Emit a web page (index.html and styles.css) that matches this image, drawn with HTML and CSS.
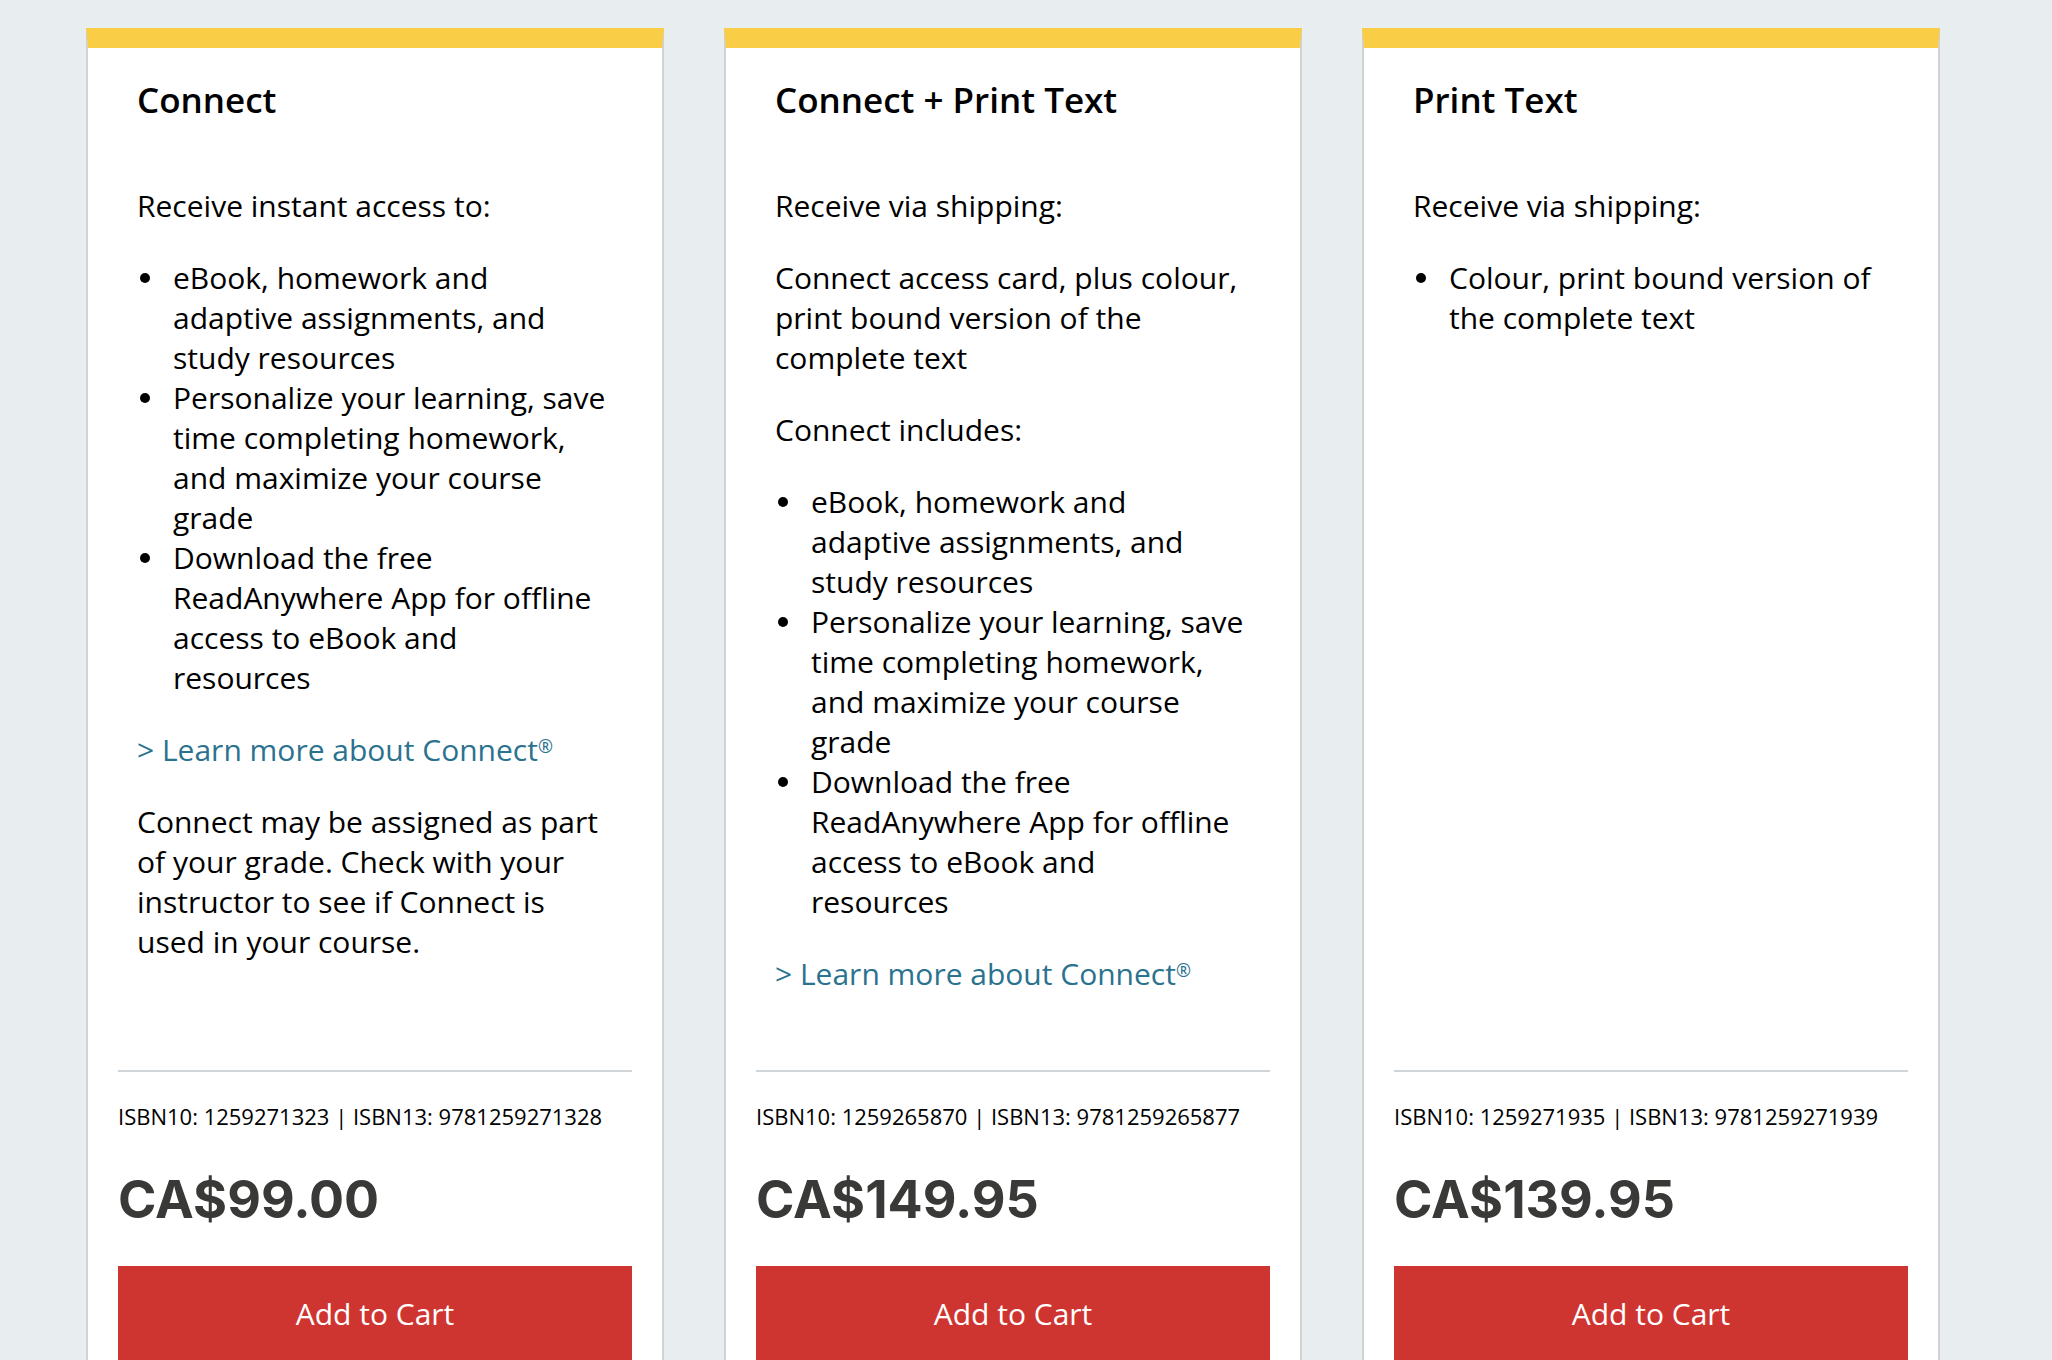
FILE: index.html
```
<!DOCTYPE html>
<html lang="en">
<head>
  <meta charset="utf-8">
  <meta name="viewport" content="width=device-width, initial-scale=1">
  <title>Purchase options</title>
  <link rel="stylesheet" href="styles.css">
</head>
<body>
  <main class="options">
    <article class="card">
      <div class="card-body">
        <h2 class="card-title">Connect</h2>
        <p>Receive instant access to:</p>
        <ul class="features">
          <li>eBook, homework and adaptive assignments, and study resources</li>
          <li>Personalize your learning, save time completing homework, and maximize your course grade</li>
          <li>Download the free ReadAnywhere App for offline access to eBook and<br>resources</li>
        </ul>
        <p><a class="learn-more" href="#connect">&gt; Learn more about Connect<sup>®</sup></a></p>
        <p>Connect may be assigned as part of your grade. Check with your instructor to see if Connect is used in your course.</p>
      </div>
      <footer class="card-footer">
        <p class="isbn">ISBN10: 1259271323 | ISBN13: 9781259271328</p>
        <p class="price">CA$99.00</p>
        <button class="add-to-cart" type="button">Add to Cart</button>
      </footer>
    </article>

    <article class="card">
      <div class="card-body">
        <h2 class="card-title">Connect + Print Text</h2>
        <p>Receive via shipping:</p>
        <p>Connect access card, plus colour, print bound version of the complete text</p>
        <p>Connect includes:</p>
        <ul class="features">
          <li>eBook, homework and adaptive assignments, and study resources</li>
          <li>Personalize your learning, save time completing homework, and maximize your course grade</li>
          <li>Download the free ReadAnywhere App for offline access to eBook and<br>resources</li>
        </ul>
        <p><a class="learn-more" href="#connect">&gt; Learn more about Connect<sup>®</sup></a></p>
      </div>
      <footer class="card-footer">
        <p class="isbn">ISBN10: 1259265870 | ISBN13: 9781259265877</p>
        <p class="price">CA$149.95</p>
        <button class="add-to-cart" type="button">Add to Cart</button>
      </footer>
    </article>

    <article class="card">
      <div class="card-body">
        <h2 class="card-title">Print Text</h2>
        <p>Receive via shipping:</p>
        <ul class="features">
          <li>Colour, print bound version of the complete text</li>
        </ul>
      </div>
      <footer class="card-footer">
        <p class="isbn">ISBN10: 1259271935 | ISBN13: 9781259271939</p>
        <p class="price">CA$139.95</p>
        <button class="add-to-cart" type="button">Add to Cart</button>
      </footer>
    </article>
  </main>
</body>
</html>
```
FILE: styles.css
```
* {
  box-sizing: border-box;
}

body {
  margin: 0;
  background: #e8eef0;
  color: #000;
  font: 30px/40px "Open Sans", "Noto Sans", sans-serif;
}

.options {
  display: grid;
  grid-template-columns: repeat(3, minmax(0, 1fr));
  gap: 60px;
  padding: 28px 112px 60px 86px;
}

.card {
  display: flex;
  flex-direction: column;
  padding: 32px 30px 30px;
  background: #fff;
  border: 2px solid #d0d2d3;
  border-top: 20px solid #f9cd46;
}

.card-body {
  flex: 1;
  padding: 0 19px 76px;
}

.card-body p,
.features {
  margin: 32px 0 0;
}

.card-title {
  margin: 0 0 66px;
  font-size: 35px;
  font-weight: 600;
  line-height: 40px;
}

.card-body .card-title + p {
  margin-top: 0;
}

.features {
  padding-left: 36px;
  list-style: none;
}

.features li::before {
  content: "";
  float: left;
  width: 10px;
  height: 10px;
  margin: 15px 23px 0 -33px;
  border-radius: 50%;
  background: currentColor;
}

.learn-more {
  color: #2b728f;
  text-decoration: none;
}

.learn-more sup {
  font-size: 18px;
  line-height: 0;
  vertical-align: 8px;
}

.card-footer {
  border-top: 2px solid #d0d5d9;
}

.isbn {
  margin: 28px 0 38px;
  font-size: 22px;
  line-height: 32px;
}

.price {
  margin: 0 0 36px;
  color: #393a38;
  font: 700 52px/60px Inter, "Open Sans", sans-serif;
}

.add-to-cart {
  display: block;
  width: 100%;
  padding: 28px;
  border: 0;
  background: #cf3530;
  color: #fff;
  font: inherit;
  cursor: pointer;
}
```
